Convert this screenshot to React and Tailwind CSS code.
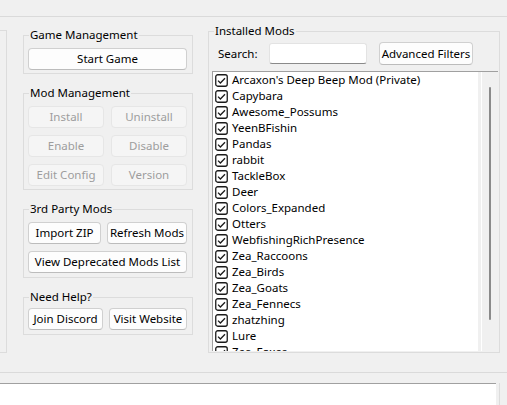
import React from "react";

const mods = [
  "Arcaxon's Deep Beep Mod (Private)",
  "Capybara",
  "Awesome_Possums",
  "YeenBFishin",
  "Pandas",
  "rabbit",
  "TackleBox",
  "Deer",
  "Colors_Expanded",
  "Otters",
  "WebfishingRichPresence",
  "Zea_Raccoons",
  "Zea_Birds",
  "Zea_Goats",
  "Zea_Fennecs",
  "zhatzhing",
  "Lure",
  "Zea_Foxes",
];

function Btn({ children, disabled, className = "" }) {
  return (
    <div
      className={
        "h-[22px] flex items-center justify-center rounded-[4px] border whitespace-nowrap " +
        (disabled
          ? "bg-[#f5f5f5] border-[#e6e6e6] text-[#9d9d9d] "
          : "bg-[#fdfdfd] border-[#d0d0d0] border-b-[#bcbcbc] text-black ") +
        className
      }
    >
      {children}
    </div>
  );
}

function Group({ title, children, className = "" }) {
  return (
    <div className={"relative border border-[#dcdcdc] " + className}>
      <span className="absolute -top-[9px] left-[5px] px-[1px] bg-[#f0f0f0] leading-[16px] text-black whitespace-nowrap">
        {title}
      </span>
      {children}
    </div>
  );
}

function Check() {
  return (
    <svg width="13" height="13" viewBox="0 0 13 13" className="shrink-0">
      <rect x="0.75" y="0.75" width="11.5" height="11.5" rx="2" fill="#fff" stroke="#1b1b1b" strokeWidth="1.3" />
      <path d="M3 6.6 L5.4 9 L10 4.2" fill="none" stroke="#1b1b1b" strokeWidth="1.3" />
    </svg>
  );
}

export default function App() {
  return (
    <div
      className="w-[507px] h-[405px] bg-[#f0f0f0] flex flex-col overflow-hidden text-[11.5px]"
      style={{ fontFamily: '"Noto Sans", sans-serif' }}
    >
      <div className="h-[17px] shrink-0 border-b border-[#dadada]" />
      <div className="h-[355px] shrink-0 flex">
        <div className="w-[7px] shrink-0 mt-[13px] h-[323px] border-t border-r border-b border-[#dcdcdc]" />
        <div className="ml-[16px] w-[170px] shrink-0 mt-[18px] flex flex-col gap-[19px]">
          <Group title="Game Management" className="pt-[12px] pl-[4px] pr-[5px] pb-[3px]">
            <Btn>Start Game</Btn>
          </Group>
          <Group title="Mod Management" className="pt-[12px] pl-[4px] pr-[5px] pb-[3px]">
            <div className="grid grid-cols-2 gap-[7px]">
              <Btn disabled>Install</Btn>
              <Btn disabled>Uninstall</Btn>
              <Btn disabled>Enable</Btn>
              <Btn disabled>Disable</Btn>
              <Btn disabled>Edit Config</Btn>
              <Btn disabled>Version</Btn>
            </div>
          </Group>
          <Group title="3rd Party Mods" className="pt-[12px] pl-[4px] pr-[5px] pb-[4px]">
            <div className="flex flex-col gap-[7px]">
              <div className="flex gap-[6px]">
                <Btn className="w-[73px]">Import ZIP</Btn>
                <Btn className="w-[80px]">Refresh Mods</Btn>
              </div>
              <Btn>View Deprecated Mods List</Btn>
            </div>
          </Group>
          <Group title="Need Help?" className="pt-[10px] pl-[4px] pr-[5px] pb-[4px]">
            <div className="flex gap-[6px]">
              <Btn className="w-[75px]">Join Discord</Btn>
              <Btn className="w-[78px]">Visit Website</Btn>
            </div>
          </Group>
        </div>
        <Group
          title="Installed Mods"
          className="ml-[15px] mt-[14px] w-[292px] h-[322px] shrink-0 pt-[10px] pb-[1px] flex flex-col"
        >
          <div className="flex items-center h-[23px]">
            <span className="ml-[9px] w-[51px] text-black">Search:</span>
            <div className="w-[98px] h-[21px] bg-white border border-[#e3e3e3] border-b-[#8a8a8a] rounded-[3px]" />
            <Btn className="ml-[12px] w-[94px] h-[23px]">Advanced Filters</Btn>
          </div>
          <div className="mt-[6px] ml-[3px] w-[286px] h-[280px] flex border-t border-l border-[#a0a0a0]">
            <div className="flex-1 bg-white overflow-hidden">
              {mods.map((m) => (
                <div key={m} className="h-[16px] flex items-center pl-[2px] gap-[4px] whitespace-nowrap text-black">
                  <Check />
                  <span className="leading-[16px]">{m}</span>
                </div>
              ))}
            </div>
            <div className="w-[20px] shrink-0 bg-[#f0f0f0] pl-[3px]">
              <div className="h-full border-l border-white pl-[7px] pt-[15px]">
                <div className="w-[2px] h-[233px] rounded-full bg-[#8a8a8a]" />
              </div>
            </div>
          </div>
        </Group>
      </div>
      <div className="flex-1 border-t border-[#dadada] pt-[10px] flex">
        <div className="w-[496px] h-full bg-white border-t border-[#a0a0a0]" />
        <div className="ml-[3px] h-full border-l border-[#dcdcdc]" />
      </div>
    </div>
  );
}
